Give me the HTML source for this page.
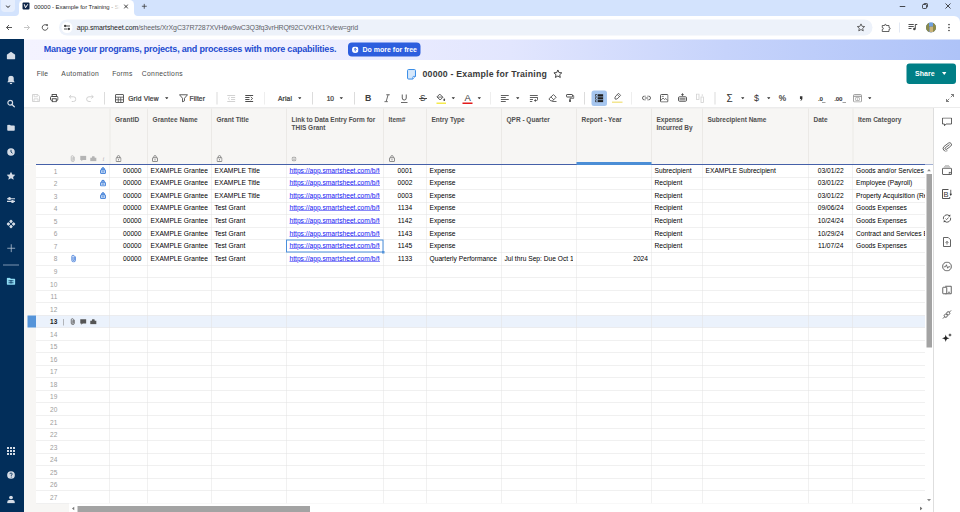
<!DOCTYPE html>
<html><head><meta charset="utf-8"><title>00000 - Example for Training - Smartsheet</title>
<style>
html,body{margin:0;padding:0;background:#fff;overflow:hidden;width:960px;height:512px}
#c{position:absolute;left:0;top:0;width:1920px;height:1024px;transform:scale(.5);transform-origin:0 0;overflow:hidden;font-family:"Liberation Sans",Arial,sans-serif;background:#fff}
#c div,#c span,#c svg{position:absolute;display:block}
#c span{white-space:nowrap}
</style></head><body><div id="c">
<div style="left:0px;top:0px;width:1920px;height:32px;background:#d3e3fd;"></div>
<div style="left:2px;top:0px;width:28px;height:23.5px;background:#e6eefd;border-radius:0 0 8px 8px"></div>
<svg style="left:11.0px;top:9.5px;" width="10" height="6" viewBox="0 0 10 6"><path d="M1 1 L5 5 L9 1" fill="none" stroke="#1f1f1f" stroke-width="2"/></svg>
<div style="left:37.5px;top:0px;width:230px;height:34px;background:#fff;border-radius:9px 9px 0 0"></div>
<svg style="left:29.5px;top:24px;" width="8" height="8" viewBox="0 0 8 8"><path d="M8 0 V8 H0 A8 8 0 0 0 8 0Z" fill="#fff"/></svg>
<svg style="left:267.5px;top:24px;" width="8" height="8" viewBox="0 0 8 8"><path d="M0 0 V8 H8 A8 8 0 0 1 0 0Z" fill="#fff"/></svg>
<div style="left:45px;top:5px;width:14px;height:14px;background:#0b2347;border-radius:2px"></div>
<svg style="left:45.0px;top:5.0px;" width="14" height="14" viewBox="0 0 14 14"><path d="M3.5 3.5 L6 10.5 L10.5 3.5" fill="none" stroke="#fff" stroke-width="2"/></svg>
<div style="left:68px;top:4px;width:172px;height:19px;overflow:hidden"><span style="left:0;top:0;font-size:12px;line-height:19px;color:#1f1f1f;letter-spacing:-0.1px">00000 - Example for Training - Smartsheet</span><div style="right:0;top:0;width:26px;height:19px;background:linear-gradient(90deg,rgba(255,255,255,0),#fff)"></div></div>
<svg style="left:247.0px;top:7.5px;" width="10" height="10" viewBox="0 0 10 10"><path d="M1 1 L9 9 M9 1 L1 9" stroke="#1f1f1f" stroke-width="1.7"/></svg>
<svg style="left:282.5px;top:7.0px;" width="11" height="11" viewBox="0 0 11 11"><path d="M5.5 0.5 V10.5 M0.5 5.5 H10.5" stroke="#333" stroke-width="1.5"/></svg>
<svg style="left:1799.0px;top:12.0px;" width="12" height="2" viewBox="0 0 12 2"><path d="M0 1 H12" stroke="#1f1f1f" stroke-width="1.6"/></svg>
<svg style="left:1844.0px;top:6.0px;" width="12" height="12" viewBox="0 0 12 12"><rect x="1" y="3" width="8" height="8" rx="1.5" fill="none" stroke="#1f1f1f" stroke-width="1.5"/><path d="M3.5 3 V2.5 A1.5 1.5 0 0 1 5 1 H9.5 A1.5 1.5 0 0 1 11 2.5 V7 A1.5 1.5 0 0 1 9.5 8.5" fill="none" stroke="#1f1f1f" stroke-width="1.5"/></svg>
<svg style="left:1890.0px;top:6.0px;" width="12" height="12" viewBox="0 0 12 12"><path d="M1 1 L11 11 M11 1 L1 11" stroke="#1f1f1f" stroke-width="1.6"/></svg>
<div style="left:0px;top:32px;width:1920px;height:46.5px;background:#fff;"></div>
<svg style="left:11.0px;top:48.0px;" width="14" height="14" viewBox="0 0 14 14"><path d="M13 7 H2 M7 2 L2 7 L7 12" fill="none" stroke="#444" stroke-width="1.8"/></svg>
<svg style="left:47.0px;top:48.0px;" width="14" height="14" viewBox="0 0 14 14"><path d="M1 7 H12 M7 2 L12 7 L7 12" fill="none" stroke="#c0c0c0" stroke-width="1.8"/></svg>
<svg style="left:82.0px;top:47.0px;" width="16" height="16" viewBox="0 0 16 16"><path d="M13.5 8 A5.5 5.5 0 1 1 11.9 4.1" fill="none" stroke="#444" stroke-width="1.9"/><path d="M9.5 1.5 H13.8 V5.8 Z" fill="#444"/></svg>
<div style="left:117.5px;top:39px;width:1627.5px;height:32px;background:#edf2fa;border-radius:16px"></div>
<div style="left:123px;top:44px;width:22px;height:22px;background:#fff;border-radius:11px"></div>
<svg style="left:127px;top:48px;" width="14" height="14" viewBox="0 0 14 14"><path d="M5 4 H13 M1 10 H8" stroke="#3c3c3c" stroke-width="1.8" fill="none"/><circle cx="3.2" cy="4" r="2.3" fill="#3c3c3c"/><circle cx="10.8" cy="10" r="2.3" fill="#3c3c3c"/></svg>
<span style="left:153.50px;top:46.00px;font-size:14px;line-height:18px;color:#1f1f1f;letter-spacing:-0.214px;">app.smartsheet.com</span>
<span style="left:276.50px;top:46.00px;font-size:14px;line-height:18px;color:#5f6368;letter-spacing:-0.238px;">/sheets/XrXgC37R7287XVH6w9wC3Q3fq3vrHRQf92CVXHX1?view=grid</span>
<svg style="left:1713.0px;top:46.0px;" width="18" height="18" viewBox="0 0 18 18"><path d="M9 1.8 L11.1 6.6 L16.3 7.1 L12.4 10.6 L13.5 15.7 L9 13 L4.5 15.7 L5.6 10.6 L1.7 7.1 L6.9 6.6 Z" fill="none" stroke="#444" stroke-width="1.6" stroke-linejoin="round"/></svg>
<svg style="left:1762px;top:46px;" width="20" height="18" viewBox="0 0 20 18"><path d="M2.5 5 H7.2 V4 Q7.2 2.8 8.8 2.8 Q10.4 2.8 10.4 4 V5 H16 V9.4 H17 Q18.3 9.4 18.3 11 Q18.3 12.6 17 12.6 H16 V17 H2.5 V12.8 H3.3 Q4.6 12.8 4.6 11 Q4.6 9.2 3.3 9.2 H2.5 Z" fill="none" stroke="#3c3c3c" stroke-width="1.6" stroke-linejoin="miter"/></svg>
<svg style="left:1908px;top:32px;" width="12" height="12" viewBox="0 0 12 12"><path d="M12 0 H0 A12 12 0 0 1 12 12 Z" fill="#d3e3fd"/></svg>
<div style="left:1798.5px;top:45px;width:1.5px;height:20px;background:#c7d3e8;"></div>
<svg style="left:1816px;top:46px;" width="20" height="16" viewBox="0 0 20 16"><path d="M1 3 H11.5 M1 7 H11.5 M1 11 H7" stroke="#444" stroke-width="1.9" fill="none"/><path d="M14.6 2.5 V11.5 M14.6 3 H18.5" stroke="#444" stroke-width="1.9" fill="none"/><circle cx="12.8" cy="11.8" r="2.5" fill="#444"/></svg>
<div style="left:1852px;top:44.5px;width:20px;height:20px;border-radius:10px;overflow:hidden;background:#4f79b8"><div style="left:0;top:0;width:6px;height:20px;background:#8a8a4a"></div><div style="left:14px;top:0;width:6px;height:20px;background:#8f8a45"></div><div style="left:6px;top:0;width:8px;height:7px;background:#6fa0dc"></div><div style="left:6.5px;top:8px;width:7px;height:12px;background:#c9b37a"></div></div>
<svg style="left:1896.0px;top:47.0px;" width="4" height="16" viewBox="0 0 4 16"><circle cx="2" cy="2" r="1.7" fill="#444"/><circle cx="2" cy="8" r="1.7" fill="#444"/><circle cx="2" cy="14" r="1.7" fill="#444"/></svg>
<div style="left:0px;top:78px;width:48px;height:946px;background:#022e5a;"></div>
<svg style="left:13.0px;top:103.0px;" width="18" height="16" viewBox="0 0 18 16"><path d="M9 0.5 L17.5 6.5 V14 A2 2 0 0 1 15.5 16 H2.5 A2 2 0 0 1 0.5 14 V6.5 Z" fill="#d5dce6"/></svg>
<svg style="left:14.0px;top:150.5px;" width="16" height="18" viewBox="0 0 16 18"><path d="M8 0.5 A5.5 5.5 0 0 1 13.5 6 V10.5 L15.5 13.5 H0.5 L2.5 10.5 V6 A5.5 5.5 0 0 1 8 0.5 Z" fill="#d5dce6"/><path d="M5.5 15 H10.5 A2.5 2.5 0 0 1 5.5 15Z" fill="#d5dce6"/></svg>
<svg style="left:14.0px;top:199.0px;" width="16" height="16" viewBox="0 0 16 16"><circle cx="6.5" cy="6.5" r="4.7" fill="none" stroke="#d5dce6" stroke-width="2.4"/><path d="M10 10 L15 15" stroke="#d5dce6" stroke-width="2.6" stroke-linecap="round"/></svg>
<svg style="left:14.0px;top:248.5px;" width="16" height="13" viewBox="0 0 16 13"><path d="M0.5 2 A1.5 1.5 0 0 1 2 0.5 H6 L7.5 2 H14 A1.5 1.5 0 0 1 15.5 3.5 V11 A1.5 1.5 0 0 1 14 12.5 H2 A1.5 1.5 0 0 1 0.5 11 Z" fill="#d5dce6"/></svg>
<svg style="left:14.0px;top:295.5px;" width="16" height="16" viewBox="0 0 16 16"><circle cx="8" cy="8" r="7.5" fill="#d5dce6"/><path d="M8 3.5 V8 L11 10.5" fill="none" stroke="#03305b" stroke-width="1.8"/></svg>
<svg style="left:13.0px;top:342.5px;" width="18" height="17" viewBox="0 0 18 17"><path d="M9 0.5 L11.6 6 L17.6 6.7 L13.2 10.8 L14.4 16.7 L9 13.7 L3.6 16.7 L4.8 10.8 L0.4 6.7 L6.4 6 Z" fill="#d5dce6"/></svg>
<svg style="left:13.0px;top:394.0px;" width="18" height="12" viewBox="0 0 18 12"><path d="M1 3.5 H17 M1 8.8 H17" stroke="#d5dce6" stroke-width="2.4"/><circle cx="6" cy="3.2" r="3" fill="#d5dce6"/><circle cx="12" cy="8.8" r="3" fill="#d5dce6"/></svg>
<svg style="left:13.0px;top:439.0px;" width="18" height="18" viewBox="0 0 18 18"><g fill="#d5dce6" transform="rotate(45 9 9)"><rect x="2.5" y="2.5" width="5.6" height="5.6" rx="1.2"/><rect x="9.9" y="2.5" width="5.6" height="5.6" rx="1.2"/><rect x="2.5" y="9.9" width="5.6" height="5.6" rx="1.2"/><rect x="9.9" y="9.9" width="5.6" height="5.6" rx="1.2"/></g></svg>
<svg style="left:14px;top:488px;" width="17" height="17" viewBox="0 0 17 17"><path d="M8.5 0.5 V16.5 M0.5 8.5 H16.5" stroke="#b4c0d0" stroke-width="1.6"/></svg>
<div style="left:6px;top:528.5px;width:32px;height:2px;background:#7d93b0;"></div>
<svg style="left:13.0px;top:554.5px;" width="18" height="15" viewBox="0 0 18 15"><path d="M0.5 2 A1.5 1.5 0 0 1 2 0.5 H7 L8.5 2.3 H16 A1.5 1.5 0 0 1 17.5 3.8 V13 A1.5 1.5 0 0 1 16 14.5 H2 A1.5 1.5 0 0 1 0.5 13 Z" fill="#8fdcf5"/><path d="M4 6.5 H14 M4 10.5 H14 M9 5 V12" stroke="#03305b" stroke-width="1.6"/></svg>
<svg style="left:14.0px;top:894.0px;" width="16" height="16" viewBox="0 0 16 16"><g fill="#d5dce6"><rect x="0" y="0" width="4" height="4"/><rect x="6" y="0" width="4" height="4"/><rect x="12" y="0" width="4" height="4"/><rect x="0" y="6" width="4" height="4"/><rect x="6" y="6" width="4" height="4"/><rect x="12" y="6" width="4" height="4"/><rect x="0" y="12" width="4" height="4"/><rect x="6" y="12" width="4" height="4"/><rect x="12" y="12" width="4" height="4"/></g></svg>
<svg style="left:14.0px;top:942.0px;" width="16" height="16" viewBox="0 0 16 16"><circle cx="8" cy="8" r="7.7" fill="#d5dce6"/><path d="M5.8 6.3 A2.3 2.3 0 1 1 8.5 8.5 V9.8" fill="none" stroke="#03305b" stroke-width="1.7"/><circle cx="8.5" cy="12.2" r="1" fill="#03305b"/></svg>
<svg style="left:14.0px;top:990.5px;" width="16" height="16" viewBox="0 0 16 16"><circle cx="8" cy="4" r="3.7" fill="#d5dce6"/><path d="M0.5 15.5 V13 A4 4 0 0 1 4.5 9 H11.5 A4 4 0 0 1 15.5 13 V15.5 Z" fill="#d5dce6"/></svg>
<div style="left:48px;top:78.5px;width:1872px;height:41px;background:linear-gradient(90deg,#f4f3ff 0%,#efefff 30%,#e2e6fe 52%,#c6d3fb 75%,#aec3f8 100%);"></div>
<span style="left:87.50px;top:86.10px;font-size:18px;line-height:23px;color:#1d4bcf;font-weight:700;letter-spacing:-0.409px;">Manage your programs, projects, and processes with more capabilities.</span>
<div style="left:696px;top:85px;width:145px;height:28px;background:#2d5ede;border-radius:8px"></div>
<svg style="left:703.5px;top:92.5px;" width="13" height="13" viewBox="0 0 13 13"><circle cx="6.5" cy="6.5" r="6.5" fill="#fff"/><path d="M6.5 9.8 V3.8 M3.8 6.3 L6.5 3.6 L9.2 6.3" fill="none" stroke="#2f5fdf" stroke-width="1.7"/></svg>
<span style="left:725.00px;top:90.00px;font-size:14px;line-height:18px;color:#fff;font-weight:700;letter-spacing:0.005px;">Do more for free</span>
<span style="left:73.50px;top:138.40px;font-size:13.5px;line-height:18px;color:#4a4a4a;letter-spacing:0.187px;">File</span>
<span style="left:122.50px;top:138.40px;font-size:13.5px;line-height:18px;color:#4a4a4a;letter-spacing:0.771px;">Automation</span>
<span style="left:224.50px;top:138.40px;font-size:13.5px;line-height:18px;color:#4a4a4a;letter-spacing:0.451px;">Forms</span>
<span style="left:283.50px;top:138.40px;font-size:13.5px;line-height:18px;color:#4a4a4a;letter-spacing:0.678px;">Connections</span>
<svg style="left:814.49px;top:138.4px;" width="18.02" height="21.200000000000003" viewBox="0 0 17 20"><path d="M3 1 H14 A2 2 0 0 1 16 3 V14 L11 19 H3 A2 2 0 0 1 1 17 V3 A2 2 0 0 1 3 1 Z" fill="#d6e8fb" stroke="#2f86e6" stroke-width="1.8"/><path d="M11 19 V15.5 A1.5 1.5 0 0 1 12.5 14 H16" fill="#fff" stroke="#2f86e6" stroke-width="1.6"/></svg>
<span style="left:845.00px;top:137.10px;font-size:17.5px;line-height:23px;color:#3a3a3a;font-weight:700;letter-spacing:0.418px;">00000 - Example for Training</span>
<svg style="left:1105.78px;top:138.28px;" width="19.44" height="19.44" viewBox="0 0 18 18"><path d="M9 1.8 L11.1 6.6 L16.3 7.1 L12.4 10.6 L13.5 15.7 L9 13 L4.5 15.7 L5.6 10.6 L1.7 7.1 L6.9 6.6 Z" fill="none" stroke="#333" stroke-width="1.7" stroke-linejoin="round"/></svg>
<div style="left:1812.5px;top:127px;width:99.5px;height:40.5px;background:#007f86;border-radius:6px"></div>
<span style="left:1830.00px;top:136.80px;font-size:14px;line-height:18px;color:#fff;font-weight:700;letter-spacing:0.117px;">Share</span>
<svg style="left:1883.5px;top:144.0px;" width="9" height="6" viewBox="0 0 9 6"><path d="M0 0 H9 L4.5 6 Z" fill="#fff"/></svg>
<svg style="left:64px;top:188px;" width="16" height="16" viewBox="0 0 16 16"><path d="M1 1 H11.5 L15 4.5 V15 H1 Z" fill="none" stroke="#cdcdcd" stroke-width="1.7"/><path d="M4.2 1 V5.5 H10.5 V1 M4 15 V9.7 H12 V15" fill="none" stroke="#cdcdcd" stroke-width="1.5"/></svg>
<svg style="left:100px;top:188px;" width="17" height="17" viewBox="0 0 17 17"><rect x="4.2" y="1" width="8.6" height="4" fill="none" stroke="#454545" stroke-width="1.8"/><rect x="1" y="5" width="15" height="7.6" rx="2" fill="none" stroke="#454545" stroke-width="2"/><rect x="4.5" y="9.5" width="8" height="6" fill="#fff" stroke="#454545" stroke-width="1.8"/></svg>
<svg style="left:136.5px;top:188.5px;" width="16" height="15" viewBox="0 0 16 15"><path d="M1.5 4.5 H10 A4.7 4.7 0 0 1 10 14 H6.5" fill="none" stroke="#cdcdcd" stroke-width="1.8"/><path d="M5.2 1 L1.5 4.5 L5.2 8" fill="none" stroke="#cdcdcd" stroke-width="1.8"/></svg>
<svg style="left:172px;top:188.5px;" width="16" height="15" viewBox="0 0 16 15"><path d="M14.5 4.5 H6 A4.7 4.7 0 0 0 6 14 H9.5" fill="none" stroke="#cdcdcd" stroke-width="1.8"/><path d="M10.8 1 L14.5 4.5 L10.8 8" fill="none" stroke="#cdcdcd" stroke-width="1.8"/></svg>
<div style="left:208.25px;top:184px;width:1.5px;height:25px;background:#dcdcdc;"></div>
<svg style="left:230px;top:188px;" width="18" height="18" viewBox="0 0 18 18"><rect x="1" y="1" width="16" height="16" rx="1" fill="none" stroke="#454545" stroke-width="1.7"/><path d="M1 6.3 H17 M1 11.6 H17 M6.5 6.3 V17 M11.5 6.3 V17" stroke="#454545" stroke-width="1.5" fill="none"/></svg>
<span style="left:256.50px;top:188.10px;font-size:13.3px;line-height:17px;color:#3a3a3a;letter-spacing:0.399px;-webkit-text-stroke:0.45px #3a3a3a;">Grid View</span>
<svg style="left:330.0px;top:193.5px;" width="7" height="5" viewBox="0 0 7 5"><path d="M0 0.3 H7 L3.5 4.7 Z" fill="#333"/></svg>
<svg style="left:357.5px;top:188px;" width="18" height="17" viewBox="0 0 18 17"><path d="M1 1.5 H17 L11 8.5 V13.6 L7 15.8 V8.5 Z" fill="none" stroke="#454545" stroke-width="1.7" stroke-linejoin="round"/></svg>
<span style="left:379.00px;top:188.10px;font-size:13.3px;line-height:17px;color:#3a3a3a;letter-spacing:0.241px;-webkit-text-stroke:0.45px #3a3a3a;">Filter</span>
<div style="left:433.25px;top:184px;width:1.5px;height:25px;background:#dcdcdc;"></div>
<svg style="left:454px;top:188px;" width="17" height="18" viewBox="0 0 17 18"><path d="M0.5 3 H16.5 M8 7 H16.5 M8 11 H16.5 M0.5 15 H16.5" stroke="#cdcdcd" stroke-width="1.8" fill="none"/><path d="M5.5 6 L2 9 L5.5 12" fill="none" stroke="#cdcdcd" stroke-width="1.6"/></svg>
<svg style="left:490px;top:188px;" width="17" height="18" viewBox="0 0 17 18"><path d="M0.5 3 H16.5 M0.5 7 H9 M0.5 11 H9 M0.5 15 H16.5" stroke="#454545" stroke-width="1.9" fill="none"/><path d="M11.5 5.8 L15.2 9 L11.5 12.2" fill="none" stroke="#454545" stroke-width="1.7"/></svg>
<div style="left:527.75px;top:184px;width:1.5px;height:25px;background:#dcdcdc;"></div>
<span style="left:556.00px;top:188.10px;font-size:13.3px;line-height:17px;color:#3a3a3a;letter-spacing:0.279px;-webkit-text-stroke:0.45px #3a3a3a;">Arial</span>
<svg style="left:595.5px;top:193.5px;" width="7" height="5" viewBox="0 0 7 5"><path d="M0 0.3 H7 L3.5 4.7 Z" fill="#333"/></svg>
<div style="left:624.25px;top:184px;width:1.5px;height:25px;background:#dcdcdc;"></div>
<span style="left:653.50px;top:188.10px;font-size:13.3px;line-height:17px;color:#3a3a3a;letter-spacing:-0.397px;-webkit-text-stroke:0.45px #3a3a3a;">10</span>
<svg style="left:679.0px;top:193.5px;" width="7" height="5" viewBox="0 0 7 5"><path d="M0 0.3 H7 L3.5 4.7 Z" fill="#333"/></svg>
<div style="left:708.25px;top:184px;width:1.5px;height:25px;background:#dcdcdc;"></div>
<span style="left:730.18px;top:185.00px;font-size:17.5px;line-height:23px;color:#404040;font-weight:700;">B</span>
<svg style="left:766px;top:188px;" width="16" height="17" viewBox="0 0 16 17"><path d="M10.2 1.5 L6.2 15.5 M6.5 1.5 H13.5 M2.8 15.5 H9.8" stroke="#454545" stroke-width="1.6" fill="none"/></svg>
<svg style="left:801px;top:187px;" width="15" height="20" viewBox="0 0 15 20"><path d="M3.5 2 V9 A4 4 0 0 0 11.5 9 V2" fill="none" stroke="#454545" stroke-width="1.7"/><path d="M1 18 H14" stroke="#454545" stroke-width="1.6"/></svg>
<span style="left:840.00px;top:186.00px;font-size:16.5px;line-height:21px;color:#333;">S</span>
<div style="left:837.5px;top:196px;width:16px;height:1.6px;background:#454545;"></div>
<svg style="left:872px;top:186.5px;" width="20" height="16" viewBox="0 0 20 16"><path d="M7.5 1.2 L13.8 7.5 L8.3 13 L2 6.7 Z" fill="none" stroke="#454545" stroke-width="1.8" stroke-linejoin="round"/><path d="M3 7.2 H13" stroke="#454545" stroke-width="1.5"/><path d="M16.5 9.5 C17.9 11.4 18.3 12.2 18.3 13 A1.8 1.8 0 0 1 14.7 13 C14.7 12.2 15.1 11.4 16.5 9.5Z" fill="#454545"/></svg>
<div style="left:873px;top:205px;width:19px;height:3px;background:#f5ea4e;"></div>
<svg style="left:903.0px;top:193.5px;" width="7" height="5" viewBox="0 0 7 5"><path d="M0 0.3 H7 L3.5 4.7 Z" fill="#333"/></svg>
<span style="left:929.16px;top:182.50px;font-size:19px;line-height:25px;color:#3a3a3a;">A</span>
<div style="left:925px;top:205px;width:20px;height:3px;background:#e31b1b;"></div>
<svg style="left:954.5px;top:193.5px;" width="7" height="5" viewBox="0 0 7 5"><path d="M0 0.3 H7 L3.5 4.7 Z" fill="#333"/></svg>
<div style="left:979.75px;top:184px;width:1.5px;height:25px;background:#dcdcdc;"></div>
<svg style="left:1001px;top:188px;" width="18" height="18" viewBox="0 0 18 18"><path d="M0.5 3 H16.5 M0.5 7 H10.5 M0.5 11 H16.5 M0.5 15 H10.5" stroke="#454545" stroke-width="1.7" fill="none"/></svg>
<svg style="left:1031.5px;top:193.5px;" width="7" height="5" viewBox="0 0 7 5"><path d="M0 0.3 H7 L3.5 4.7 Z" fill="#333"/></svg>
<svg style="left:1059px;top:188px;" width="18" height="18" viewBox="0 0 18 18"><path d="M0.5 3 H16.5 M0.5 7 H16.5 M0.5 11 H7 M0.5 15 H5.5" stroke="#454545" stroke-width="1.7" fill="none"/><path d="M16 7 V11 A2 2 0 0 1 14 13 H10.5" fill="none" stroke="#454545" stroke-width="1.6"/><path d="M12.5 10.2 L9 13 L12.5 15.8 Z" fill="#454545"/></svg>
<svg style="left:1096px;top:188px;" width="18" height="17" viewBox="0 0 18 17"><path d="M11 1.2 L16.3 6.5 L9 13.8 H5.7 L1.7 9.8 Z" fill="none" stroke="#454545" stroke-width="1.7" stroke-linejoin="round"/><path d="M5.8 5.8 L11.7 11.7 M8.5 15 H17" stroke="#454545" stroke-width="1.6"/></svg>
<svg style="left:1132px;top:188px;" width="17" height="17" viewBox="0 0 17 17"><rect x="1" y="1" width="12" height="5" rx="1.2" fill="none" stroke="#454545" stroke-width="1.9"/><path d="M13 3.5 H15.7 V8.5 H8 V11" fill="none" stroke="#454545" stroke-width="1.6"/><rect x="6.3" y="10.5" width="3.4" height="5.7" rx="1.2" fill="#454545"/></svg>
<div style="left:1168.25px;top:184px;width:1.5px;height:25px;background:#dcdcdc;"></div>
<div style="left:1182.5px;top:180.5px;width:31.5px;height:31px;background:#a6c6ef;border-radius:5px"></div>
<svg style="left:1190px;top:188px;" width="17" height="17" viewBox="0 0 17 17"><rect x="0.5" y="0.5" width="16" height="16" fill="#1f1f1f"/><path d="M0 5.7 H17 M0 11.3 H17" stroke="#a6c6ef" stroke-width="1.3"/><path d="M5 0 V17" stroke="#a6c6ef" stroke-width="1.2"/><rect x="1.8" y="1.8" width="2.2" height="2.8" fill="#a6c6ef"/><rect x="1.8" y="7" width="2.2" height="3" fill="#a6c6ef"/><rect x="1.8" y="12.5" width="2.2" height="2.8" fill="#a6c6ef"/></svg>
<svg style="left:1227px;top:185px;" width="16" height="16" viewBox="0 0 16 16"><path d="M10 1.5 L14.3 5.8 L7 13.1 H3 V9.1 Z" fill="none" stroke="#454545" stroke-width="1.6" stroke-linejoin="round"/><path d="M7.6 4 L11.8 8.2" stroke="#454545" stroke-width="1.5"/></svg>
<div style="left:1224px;top:202.5px;width:21px;height:3px;background:#f3e691;"></div>
<div style="left:1262.75px;top:184px;width:1.5px;height:25px;background:#dcdcdc;"></div>
<svg style="left:1284px;top:191px;" width="18" height="10" viewBox="0 0 18 10"><path d="M7.5 1 H5 A4 4 0 0 0 5 9 H7.5 M10.5 1 H13 A4 4 0 0 1 13 9 H10.5 M5.7 5 H12.3" fill="none" stroke="#454545" stroke-width="1.7"/></svg>
<svg style="left:1320px;top:188px;" width="17" height="17" viewBox="0 0 17 17"><rect x="1" y="1" width="15" height="15" rx="1.8" fill="none" stroke="#454545" stroke-width="1.8"/><path d="M1.5 13 L6 8 L9 11 L11.5 9 L15.5 13" fill="none" stroke="#454545" stroke-width="1.5"/><path d="M3.5 4.8 H7.5" stroke="#454545" stroke-width="1.4"/></svg>
<svg style="left:1356px;top:186px;" width="18" height="18" viewBox="0 0 18 18"><path d="M9 0.5 V6 M6.3 3.2 H11.7" stroke="#454545" stroke-width="1.6"/><rect x="1" y="7.5" width="16" height="9" rx="2" fill="none" stroke="#454545" stroke-width="1.8"/><path d="M3 10.7 H15 M3 13.5 H15" stroke="#454545" stroke-width="1.4"/></svg>
<svg style="left:1392px;top:187px;" width="16" height="19" viewBox="0 0 16 19"><rect x="1" y="1" width="5" height="11" fill="none" stroke="#cdcdcd" stroke-width="1.5"/><rect x="10" y="7" width="5" height="11" fill="none" stroke="#cdcdcd" stroke-width="1.5"/><path d="M12.5 1.5 V5" stroke="#cdcdcd" stroke-width="1.5"/></svg>
<div style="left:1429.25px;top:184px;width:1.5px;height:25px;background:#dcdcdc;"></div>
<span style="left:1452.82px;top:183.00px;font-size:20px;line-height:26px;color:#333;">Σ</span>
<svg style="left:1481.5px;top:193.5px;" width="7" height="5" viewBox="0 0 7 5"><path d="M0 0.3 H7 L3.5 4.7 Z" fill="#333"/></svg>
<span style="left:1507.99px;top:184.50px;font-size:18px;line-height:23px;color:#333;">$</span>
<svg style="left:1534.0px;top:193.5px;" width="7" height="5" viewBox="0 0 7 5"><path d="M0 0.3 H7 L3.5 4.7 Z" fill="#333"/></svg>
<span style="left:1557.66px;top:186.00px;font-size:16.5px;line-height:21px;color:#333;-webkit-text-stroke:0.35px #333;">%</span>
<svg style="left:1599px;top:191.5px;" width="7" height="10" viewBox="0 0 7 10"><path d="M0.8 0.5 H5.8 V5 C5.8 7.5 4.3 9 2 9.5 V8.2 C3 7.8 3.5 7 3.5 5.8 H0.8 Z" fill="#333"/></svg>
<span style="left:1635.79px;top:189.00px;font-size:12.5px;line-height:16px;color:#333;font-weight:700;letter-spacing:-0.3px;">.0</span>
<div style="left:1644px;top:204.7px;width:7px;height:1.4px;background:#454545;"></div>
<span style="left:1668.31px;top:189.00px;font-size:12.5px;line-height:16px;color:#333;font-weight:700;letter-spacing:-0.3px;">.00</span>
<div style="left:1685px;top:204.7px;width:7px;height:1.4px;background:#454545;"></div>
<svg style="left:1706px;top:187px;" width="18" height="18" viewBox="0 0 18 18"><rect x="1" y="2" width="16" height="15" rx="2" fill="none" stroke="#8c8c8c" stroke-width="1.6"/><path d="M1 5.5 H17" stroke="#8c8c8c" stroke-width="2"/><rect x="5.5" y="8.5" width="7" height="5.5" fill="none" stroke="#8c8c8c" stroke-width="1.2"/><path d="M9 9.5 V13" stroke="#8c8c8c" stroke-width="1"/></svg>
<svg style="left:1735.5px;top:193.5px;" width="7" height="5" viewBox="0 0 7 5"><path d="M0 0.3 H7 L3.5 4.7 Z" fill="#333"/></svg>
<svg style="left:1892px;top:188px;" width="16" height="16" viewBox="0 0 16 16"><path d="M10 1 H15 V6 M15 1 L9.5 6.5 M6 15 H1 V10 M1 15 L6.5 9.5" fill="none" stroke="#555" stroke-width="1.5"/></svg>
<div style="left:48px;top:215.2px;width:1872px;height:1.8px;background:#d9d9d9;"></div>
<div style="left:48px;top:217px;width:1819px;height:112px;background:#f7f6f4;"></div>
<div style="left:48px;top:329px;width:24px;height:695px;background:#f7f6f4;"></div>
<div style="left:72px;top:1007.5px;width:66px;height:17px;background:#f7f6f4;"></div>
<div style="left:219px;top:217px;width:1.5px;height:111px;background:#ebe9e6;"></div>
<div style="left:294px;top:217px;width:1.5px;height:111px;background:#ebe9e6;"></div>
<div style="left:422px;top:217px;width:1.5px;height:111px;background:#ebe9e6;"></div>
<div style="left:572px;top:217px;width:1.5px;height:111px;background:#ebe9e6;"></div>
<div style="left:766px;top:217px;width:1.5px;height:111px;background:#ebe9e6;"></div>
<div style="left:852px;top:217px;width:1.5px;height:111px;background:#ebe9e6;"></div>
<div style="left:1002px;top:217px;width:1.5px;height:111px;background:#ebe9e6;"></div>
<div style="left:1152px;top:217px;width:1.5px;height:111px;background:#ebe9e6;"></div>
<div style="left:1302px;top:217px;width:1.5px;height:111px;background:#ebe9e6;"></div>
<div style="left:1404px;top:217px;width:1.5px;height:111px;background:#ebe9e6;"></div>
<div style="left:1616px;top:217px;width:1.5px;height:111px;background:#ebe9e6;"></div>
<div style="left:1705px;top:217px;width:1.5px;height:111px;background:#ebe9e6;"></div>
<span style="left:230.00px;top:230.50px;font-size:13px;line-height:17px;color:#505050;font-weight:700;letter-spacing:0.118px;">GrantID</span>
<span style="left:305.00px;top:230.50px;font-size:13px;line-height:17px;color:#505050;font-weight:700;letter-spacing:0.196px;">Grantee Name</span>
<span style="left:433.00px;top:230.50px;font-size:13px;line-height:17px;color:#505050;font-weight:700;">Grant Title</span>
<span style="left:777.00px;top:230.50px;font-size:13px;line-height:17px;color:#505050;font-weight:700;">Item#</span>
<span style="left:863.00px;top:230.50px;font-size:13px;line-height:17px;color:#505050;font-weight:700;">Entry Type</span>
<span style="left:1013.00px;top:230.50px;font-size:13px;line-height:17px;color:#505050;font-weight:700;">QPR - Quarter</span>
<span style="left:1163.00px;top:230.50px;font-size:13px;line-height:17px;color:#505050;font-weight:700;">Report - Year</span>
<span style="left:1415.00px;top:230.50px;font-size:13px;line-height:17px;color:#505050;font-weight:700;">Subrecipient Name</span>
<span style="left:1627.00px;top:230.50px;font-size:13px;line-height:17px;color:#505050;font-weight:700;">Date</span>
<span style="left:1716.00px;top:230.50px;font-size:13px;line-height:17px;color:#505050;font-weight:700;">Item Category</span>
<span style="left:583.00px;top:230.50px;font-size:13px;line-height:17px;color:#505050;font-weight:700;letter-spacing:-0.029px;">Link to Data Entry Form for</span>
<span style="left:583.00px;top:246.50px;font-size:13px;line-height:17px;color:#505050;font-weight:700;">THIS Grant</span>
<span style="left:1313.00px;top:230.50px;font-size:13px;line-height:17px;color:#505050;font-weight:700;">Expense</span>
<span style="left:1313.00px;top:246.50px;font-size:13px;line-height:17px;color:#505050;font-weight:700;">Incurred By</span>
<svg style="left:230.5px;top:310.0px;" width="12" height="14" viewBox="0 0 12 14"><rect x="1" y="5.5" width="10" height="7.5" rx="0.8" fill="none" stroke="#6b6b6b" stroke-width="1.5"/><path d="M3.5 5.5 V3.6 A2.5 2.5 0 0 1 8.5 3.6 V5.5" fill="none" stroke="#6b6b6b" stroke-width="1.4"/><path d="M6 8 V10.8" stroke="#6b6b6b" stroke-width="1.4"/></svg>
<svg style="left:304.0px;top:310.0px;" width="12" height="14" viewBox="0 0 12 14"><rect x="1" y="5.5" width="10" height="7.5" rx="0.8" fill="none" stroke="#6b6b6b" stroke-width="1.5"/><path d="M3.5 5.5 V3.6 A2.5 2.5 0 0 1 8.5 3.6 V5.5" fill="none" stroke="#6b6b6b" stroke-width="1.4"/><path d="M6 8 V10.8" stroke="#6b6b6b" stroke-width="1.4"/></svg>
<svg style="left:433.0px;top:310.0px;" width="12" height="14" viewBox="0 0 12 14"><rect x="1" y="5.5" width="10" height="7.5" rx="0.8" fill="none" stroke="#6b6b6b" stroke-width="1.5"/><path d="M3.5 5.5 V3.6 A2.5 2.5 0 0 1 8.5 3.6 V5.5" fill="none" stroke="#6b6b6b" stroke-width="1.4"/><path d="M6 8 V10.8" stroke="#6b6b6b" stroke-width="1.4"/></svg>
<svg style="left:777.5px;top:310.0px;" width="12" height="14" viewBox="0 0 12 14"><rect x="1" y="5.5" width="10" height="7.5" rx="0.8" fill="none" stroke="#6b6b6b" stroke-width="1.5"/><path d="M3.5 5.5 V3.6 A2.5 2.5 0 0 1 8.5 3.6 V5.5" fill="none" stroke="#6b6b6b" stroke-width="1.4"/><path d="M6 8 V10.8" stroke="#6b6b6b" stroke-width="1.4"/></svg>
<svg style="left:582.5px;top:312.5px;" width="10" height="10" viewBox="0 0 10 10"><circle cx="5" cy="5" r="4.2" fill="none" stroke="#6b6b6b" stroke-width="1.2"/><path d="M5 4.3 V7.6" stroke="#6b6b6b" stroke-width="1.3"/><circle cx="5" cy="2.8" r="0.8" fill="#6b6b6b"/></svg>
<svg style="left:140.4px;top:309.72px;" width="11.200000000000001" height="14.560000000000002" viewBox="0 0 10 13"><path d="M7.8 3.2 V9 A2.8 2.8 0 0 1 2.2 9 V3.2 A2 2 0 0 1 6.2 3.2 V8.6 A1.1 1.1 0 0 1 4 8.6 V4" fill="none" stroke="#b4b4b4" stroke-width="1.3"/></svg>
<svg style="left:159.9px;top:311.45px;" width="13.200000000000001" height="12.100000000000001" viewBox="0 0 12 11"><path d="M0.5 0.5 H11.5 V8 H5 L2.5 10.5 V8 H0.5 Z" fill="#b4b4b4"/></svg>
<svg style="left:180.4px;top:312.0px;" width="13.200000000000001" height="11.0" viewBox="0 0 12 10"><path d="M0.5 3 H11.5 V9.5 H0.5 Z M3.5 3 V1.6 A1 1 0 0 1 4.5 0.6 H7.5 A1 1 0 0 1 8.5 1.6 V3" fill="#b4b4b4"/></svg>
<span style="left:205.06px;top:308.50px;font-size:13px;line-height:17px;color:#b4b4b4;font-style:italic;font-family:'Liberation Serif',serif;">i</span>
<div style="left:72px;top:329px;width:1778px;height:676px;background:#fff;"></div>
<div style="left:55px;top:631px;width:17px;height:24px;background:#5594d9;"></div>
<div style="left:72px;top:631px;width:1778px;height:24px;background:#ebf2fc;"></div>
<div style="left:72px;top:354px;width:1778px;height:1px;background:#e0e0e0;"></div>
<div style="left:72px;top:379px;width:1778px;height:1px;background:#e0e0e0;"></div>
<div style="left:72px;top:404px;width:1778px;height:1px;background:#e0e0e0;"></div>
<div style="left:72px;top:429px;width:1778px;height:1px;background:#e0e0e0;"></div>
<div style="left:72px;top:454px;width:1778px;height:1px;background:#e0e0e0;"></div>
<div style="left:72px;top:479px;width:1778px;height:1px;background:#e0e0e0;"></div>
<div style="left:72px;top:504px;width:1778px;height:1px;background:#e0e0e0;"></div>
<div style="left:72px;top:530px;width:1778px;height:1px;background:#e0e0e0;"></div>
<div style="left:72px;top:555px;width:1778px;height:1px;background:#e0e0e0;"></div>
<div style="left:72px;top:580px;width:1778px;height:1px;background:#e0e0e0;"></div>
<div style="left:72px;top:605px;width:1778px;height:1px;background:#e0e0e0;"></div>
<div style="left:72px;top:630px;width:1778px;height:1px;background:#e0e0e0;"></div>
<div style="left:72px;top:655px;width:1778px;height:1px;background:#e0e0e0;"></div>
<div style="left:72px;top:680px;width:1778px;height:1px;background:#e0e0e0;"></div>
<div style="left:72px;top:705px;width:1778px;height:1px;background:#e0e0e0;"></div>
<div style="left:72px;top:730px;width:1778px;height:1px;background:#e0e0e0;"></div>
<div style="left:72px;top:755px;width:1778px;height:1px;background:#e0e0e0;"></div>
<div style="left:72px;top:780px;width:1778px;height:1px;background:#e0e0e0;"></div>
<div style="left:72px;top:805px;width:1778px;height:1px;background:#e0e0e0;"></div>
<div style="left:72px;top:831px;width:1778px;height:1px;background:#e0e0e0;"></div>
<div style="left:72px;top:856px;width:1778px;height:1px;background:#e0e0e0;"></div>
<div style="left:72px;top:881px;width:1778px;height:1px;background:#e0e0e0;"></div>
<div style="left:72px;top:906px;width:1778px;height:1px;background:#e0e0e0;"></div>
<div style="left:72px;top:931px;width:1778px;height:1px;background:#e0e0e0;"></div>
<div style="left:72px;top:956px;width:1778px;height:1px;background:#e0e0e0;"></div>
<div style="left:72px;top:981px;width:1778px;height:1px;background:#e0e0e0;"></div>
<div style="left:72px;top:1006px;width:1778px;height:1px;background:#e0e0e0;"></div>
<div style="left:219px;top:329px;width:1px;height:678px;background:#e2e2e2;"></div>
<div style="left:294px;top:329px;width:1px;height:678px;background:#e2e2e2;"></div>
<div style="left:422px;top:329px;width:1px;height:678px;background:#e2e2e2;"></div>
<div style="left:572px;top:329px;width:1px;height:678px;background:#e2e2e2;"></div>
<div style="left:766px;top:329px;width:1px;height:678px;background:#e2e2e2;"></div>
<div style="left:852px;top:329px;width:1px;height:678px;background:#e2e2e2;"></div>
<div style="left:1002px;top:329px;width:1px;height:678px;background:#e2e2e2;"></div>
<div style="left:1152px;top:329px;width:1px;height:678px;background:#e2e2e2;"></div>
<div style="left:1302px;top:329px;width:1px;height:678px;background:#e2e2e2;"></div>
<div style="left:1404px;top:329px;width:1px;height:678px;background:#e2e2e2;"></div>
<div style="left:1616px;top:329px;width:1px;height:678px;background:#e2e2e2;"></div>
<div style="left:1705px;top:329px;width:1px;height:678px;background:#e2e2e2;"></div>
<div style="left:72px;top:328px;width:1794px;height:2px;background:#4560a8;"></div>
<div style="left:1153px;top:324px;width:150px;height:6px;background:#4b8ed6;"></div>
<span style="left:107.27px;top:333.92px;font-size:13px;line-height:17px;color:#9c9c9c;">1</span>
<span style="left:107.27px;top:359.00px;font-size:13px;line-height:17px;color:#9c9c9c;">2</span>
<span style="left:107.27px;top:384.08px;font-size:13px;line-height:17px;color:#9c9c9c;">3</span>
<span style="left:107.27px;top:409.16px;font-size:13px;line-height:17px;color:#9c9c9c;">4</span>
<span style="left:107.27px;top:434.24px;font-size:13px;line-height:17px;color:#9c9c9c;">5</span>
<span style="left:107.27px;top:459.32px;font-size:13px;line-height:17px;color:#9c9c9c;">6</span>
<span style="left:107.27px;top:484.40px;font-size:13px;line-height:17px;color:#9c9c9c;">7</span>
<span style="left:107.27px;top:509.48px;font-size:13px;line-height:17px;color:#9c9c9c;">8</span>
<span style="left:107.27px;top:534.56px;font-size:13px;line-height:17px;color:#9c9c9c;">9</span>
<span style="left:100.04px;top:559.64px;font-size:13px;line-height:17px;color:#9c9c9c;">10</span>
<span style="left:101.00px;top:584.72px;font-size:13px;line-height:17px;color:#9c9c9c;">11</span>
<span style="left:100.04px;top:609.80px;font-size:13px;line-height:17px;color:#9c9c9c;">12</span>
<span style="left:100.04px;top:634.88px;font-size:13px;line-height:17px;color:#222;font-weight:700;">13</span>
<span style="left:100.04px;top:659.96px;font-size:13px;line-height:17px;color:#9c9c9c;">14</span>
<span style="left:100.04px;top:685.04px;font-size:13px;line-height:17px;color:#9c9c9c;">15</span>
<span style="left:100.04px;top:710.12px;font-size:13px;line-height:17px;color:#9c9c9c;">16</span>
<span style="left:100.04px;top:735.20px;font-size:13px;line-height:17px;color:#9c9c9c;">17</span>
<span style="left:100.04px;top:760.28px;font-size:13px;line-height:17px;color:#9c9c9c;">18</span>
<span style="left:100.04px;top:785.36px;font-size:13px;line-height:17px;color:#9c9c9c;">19</span>
<span style="left:100.04px;top:810.44px;font-size:13px;line-height:17px;color:#9c9c9c;">20</span>
<span style="left:100.04px;top:835.52px;font-size:13px;line-height:17px;color:#9c9c9c;">21</span>
<span style="left:100.04px;top:860.60px;font-size:13px;line-height:17px;color:#9c9c9c;">22</span>
<span style="left:100.04px;top:885.68px;font-size:13px;line-height:17px;color:#9c9c9c;">23</span>
<span style="left:100.04px;top:910.76px;font-size:13px;line-height:17px;color:#9c9c9c;">24</span>
<span style="left:100.04px;top:935.84px;font-size:13px;line-height:17px;color:#9c9c9c;">25</span>
<span style="left:100.04px;top:960.92px;font-size:13px;line-height:17px;color:#9c9c9c;">26</span>
<span style="left:100.04px;top:986.00px;font-size:13px;line-height:17px;color:#9c9c9c;">27</span>
<div style="left:126px;top:637.88px;width:1.3px;height:13px;background:#777;"></div>
<svg style="left:140.4px;top:636.1px;" width="11.200000000000001" height="14.560000000000002" viewBox="0 0 10 13"><path d="M7.8 3.2 V9 A2.8 2.8 0 0 1 2.2 9 V3.2 A2 2 0 0 1 6.2 3.2 V8.6 A1.1 1.1 0 0 1 4 8.6 V4" fill="none" stroke="#555" stroke-width="1.3"/></svg>
<svg style="left:159.9px;top:637.83px;" width="13.200000000000001" height="12.100000000000001" viewBox="0 0 12 11"><path d="M0.5 0.5 H11.5 V8 H5 L2.5 10.5 V8 H0.5 Z" fill="#555"/></svg>
<svg style="left:180.4px;top:638.38px;" width="13.200000000000001" height="11.0" viewBox="0 0 12 10"><path d="M0.5 3 H11.5 V9.5 H0.5 Z M3.5 3 V1.6 A1 1 0 0 1 4.5 0.6 H7.5 A1 1 0 0 1 8.5 1.6 V3" fill="#555"/></svg>
<svg style="left:200.4px;top:334.22px;" width="12" height="14" viewBox="0 0 12 14"><path d="M3.3 6 V4 A2.7 2.7 0 0 1 8.7 4 V6" fill="#8fb6ea" stroke="#3173d3" stroke-width="1.8"/><rect x="1" y="5.6" width="10" height="7.4" rx="1" fill="#b7d1f3" stroke="#3173d3" stroke-width="1.6"/><path d="M6 7.8 V10.8" stroke="#2a68c8" stroke-width="1.5"/></svg>
<svg style="left:200.4px;top:359.3px;" width="12" height="14" viewBox="0 0 12 14"><path d="M3.3 6 V4 A2.7 2.7 0 0 1 8.7 4 V6" fill="#8fb6ea" stroke="#3173d3" stroke-width="1.8"/><rect x="1" y="5.6" width="10" height="7.4" rx="1" fill="#b7d1f3" stroke="#3173d3" stroke-width="1.6"/><path d="M6 7.8 V10.8" stroke="#2a68c8" stroke-width="1.5"/></svg>
<svg style="left:200.4px;top:384.38000000000005px;" width="12" height="14" viewBox="0 0 12 14"><path d="M3.3 6 V4 A2.7 2.7 0 0 1 8.7 4 V6" fill="#8fb6ea" stroke="#3173d3" stroke-width="1.8"/><rect x="1" y="5.6" width="10" height="7.4" rx="1" fill="#b7d1f3" stroke="#3173d3" stroke-width="1.6"/><path d="M6 7.8 V10.8" stroke="#2a68c8" stroke-width="1.5"/></svg>
<svg style="left:140.75px;top:508.855px;" width="12.5" height="16.25" viewBox="0 0 10 13"><path d="M8 3.2 V9 A3 3 0 0 1 2 9 V3.2 A2.1 2.1 0 0 1 6.2 3.2 V8.6 A1.1 1.1 0 0 1 4 8.6 V4" fill="#dbe7f8" stroke="#3a76d8" stroke-width="1.15"/></svg>
<div style="left:220px;top:329.0px;width:68px;height:24px;overflow:hidden"><span style="right:0px;top:-1px;font-size:13.33px;line-height:25px;color:#000;margin-right:5px;">00000</span></div>
<div style="left:295px;top:329.0px;width:121px;height:24px;overflow:hidden"><span style="left:6px;top:-1px;font-size:13.33px;line-height:25px;color:#000;">EXAMPLE Grantee</span></div>
<div style="left:423px;top:329.0px;width:143px;height:24px;overflow:hidden"><span style="left:6px;top:-1px;font-size:13.33px;line-height:25px;color:#000;">EXAMPLE Title</span></div>
<div style="left:573px;top:329.0px;width:187px;height:24px;overflow:hidden"><span style="left:6px;top:-1px;font-size:13.33px;line-height:25px;color:#1414f2;text-decoration:underline;">https://app.smartsheet.com/b/form/0a1b2c3d</span></div>
<div style="left:767px;top:329.0px;width:79px;height:24px;overflow:hidden"><span style="left:0;right:-7px;text-align:center;top:-1px;font-size:13.33px;line-height:25px;color:#000;">0001</span></div>
<div style="left:853px;top:329.0px;width:143px;height:24px;overflow:hidden"><span style="left:6px;top:-1px;font-size:13.33px;line-height:25px;color:#000;">Expense</span></div>
<div style="left:1303px;top:329.0px;width:95px;height:24px;overflow:hidden"><span style="left:6px;top:-1px;font-size:13.33px;line-height:25px;color:#000;">Subrecipient</span></div>
<div style="left:1405px;top:329.0px;width:205px;height:24px;overflow:hidden"><span style="left:6px;top:-1px;font-size:13.33px;line-height:25px;color:#000;">EXAMPLE Subrecipient</span></div>
<div style="left:1617px;top:329.0px;width:82px;height:24px;overflow:hidden"><span style="left:0;right:-7px;text-align:center;top:-1px;font-size:13.33px;line-height:25px;color:#000;">03/01/22</span></div>
<div style="left:1706px;top:329.0px;width:144px;height:24px;overflow:hidden"><span style="left:6px;top:-1px;font-size:13.33px;line-height:25px;color:#000;">Goods and/or Services</span></div>
<div style="left:220px;top:354.0px;width:68px;height:24px;overflow:hidden"><span style="right:0px;top:-1px;font-size:13.33px;line-height:25px;color:#000;margin-right:5px;">00000</span></div>
<div style="left:295px;top:354.0px;width:121px;height:24px;overflow:hidden"><span style="left:6px;top:-1px;font-size:13.33px;line-height:25px;color:#000;">EXAMPLE Grantee</span></div>
<div style="left:423px;top:354.0px;width:143px;height:24px;overflow:hidden"><span style="left:6px;top:-1px;font-size:13.33px;line-height:25px;color:#000;">EXAMPLE Title</span></div>
<div style="left:573px;top:354.0px;width:187px;height:24px;overflow:hidden"><span style="left:6px;top:-1px;font-size:13.33px;line-height:25px;color:#1414f2;text-decoration:underline;">https://app.smartsheet.com/b/form/0a1b2c3d</span></div>
<div style="left:767px;top:354.0px;width:79px;height:24px;overflow:hidden"><span style="left:0;right:-7px;text-align:center;top:-1px;font-size:13.33px;line-height:25px;color:#000;">0002</span></div>
<div style="left:853px;top:354.0px;width:143px;height:24px;overflow:hidden"><span style="left:6px;top:-1px;font-size:13.33px;line-height:25px;color:#000;">Expense</span></div>
<div style="left:1303px;top:354.0px;width:95px;height:24px;overflow:hidden"><span style="left:6px;top:-1px;font-size:13.33px;line-height:25px;color:#000;">Recipient</span></div>
<div style="left:1617px;top:354.0px;width:82px;height:24px;overflow:hidden"><span style="left:0;right:-7px;text-align:center;top:-1px;font-size:13.33px;line-height:25px;color:#000;">03/01/22</span></div>
<div style="left:1706px;top:354.0px;width:144px;height:24px;overflow:hidden"><span style="left:6px;top:-1px;font-size:13.33px;line-height:25px;color:#000;">Employee (Payroll)</span></div>
<div style="left:220px;top:379.0px;width:68px;height:24px;overflow:hidden"><span style="right:0px;top:-1px;font-size:13.33px;line-height:25px;color:#000;margin-right:5px;">00000</span></div>
<div style="left:295px;top:379.0px;width:121px;height:24px;overflow:hidden"><span style="left:6px;top:-1px;font-size:13.33px;line-height:25px;color:#000;">EXAMPLE Grantee</span></div>
<div style="left:423px;top:379.0px;width:143px;height:24px;overflow:hidden"><span style="left:6px;top:-1px;font-size:13.33px;line-height:25px;color:#000;">EXAMPLE Title</span></div>
<div style="left:573px;top:379.0px;width:187px;height:24px;overflow:hidden"><span style="left:6px;top:-1px;font-size:13.33px;line-height:25px;color:#1414f2;text-decoration:underline;">https://app.smartsheet.com/b/form/0a1b2c3d</span></div>
<div style="left:767px;top:379.0px;width:79px;height:24px;overflow:hidden"><span style="left:0;right:-7px;text-align:center;top:-1px;font-size:13.33px;line-height:25px;color:#000;">0003</span></div>
<div style="left:853px;top:379.0px;width:143px;height:24px;overflow:hidden"><span style="left:6px;top:-1px;font-size:13.33px;line-height:25px;color:#000;">Expense</span></div>
<div style="left:1303px;top:379.0px;width:95px;height:24px;overflow:hidden"><span style="left:6px;top:-1px;font-size:13.33px;line-height:25px;color:#000;">Recipient</span></div>
<div style="left:1617px;top:379.0px;width:82px;height:24px;overflow:hidden"><span style="left:0;right:-7px;text-align:center;top:-1px;font-size:13.33px;line-height:25px;color:#000;">03/01/22</span></div>
<div style="left:1706px;top:379.0px;width:144px;height:24px;overflow:hidden"><span style="left:6px;top:-1px;font-size:13.33px;line-height:25px;color:#000;">Property Acquisition (Real)</span></div>
<div style="left:220px;top:404.0px;width:68px;height:24px;overflow:hidden"><span style="right:0px;top:-1px;font-size:13.33px;line-height:25px;color:#000;margin-right:5px;">00000</span></div>
<div style="left:295px;top:404.0px;width:121px;height:24px;overflow:hidden"><span style="left:6px;top:-1px;font-size:13.33px;line-height:25px;color:#000;">EXAMPLE Grantee</span></div>
<div style="left:423px;top:404.0px;width:143px;height:24px;overflow:hidden"><span style="left:6px;top:-1px;font-size:13.33px;line-height:25px;color:#000;">Test Grant</span></div>
<div style="left:573px;top:404.0px;width:187px;height:24px;overflow:hidden"><span style="left:6px;top:-1px;font-size:13.33px;line-height:25px;color:#1414f2;text-decoration:underline;">https://app.smartsheet.com/b/form/0a1b2c3d</span></div>
<div style="left:767px;top:404.0px;width:79px;height:24px;overflow:hidden"><span style="left:0;right:-7px;text-align:center;top:-1px;font-size:13.33px;line-height:25px;color:#000;">1134</span></div>
<div style="left:853px;top:404.0px;width:143px;height:24px;overflow:hidden"><span style="left:6px;top:-1px;font-size:13.33px;line-height:25px;color:#000;">Expense</span></div>
<div style="left:1303px;top:404.0px;width:95px;height:24px;overflow:hidden"><span style="left:6px;top:-1px;font-size:13.33px;line-height:25px;color:#000;">Recipient</span></div>
<div style="left:1617px;top:404.0px;width:82px;height:24px;overflow:hidden"><span style="left:0;right:-7px;text-align:center;top:-1px;font-size:13.33px;line-height:25px;color:#000;">09/06/24</span></div>
<div style="left:1706px;top:404.0px;width:144px;height:24px;overflow:hidden"><span style="left:6px;top:-1px;font-size:13.33px;line-height:25px;color:#000;">Goods Expenses</span></div>
<div style="left:220px;top:429.0px;width:68px;height:24px;overflow:hidden"><span style="right:0px;top:-1px;font-size:13.33px;line-height:25px;color:#000;margin-right:5px;">00000</span></div>
<div style="left:295px;top:429.0px;width:121px;height:24px;overflow:hidden"><span style="left:6px;top:-1px;font-size:13.33px;line-height:25px;color:#000;">EXAMPLE Grantee</span></div>
<div style="left:423px;top:429.0px;width:143px;height:24px;overflow:hidden"><span style="left:6px;top:-1px;font-size:13.33px;line-height:25px;color:#000;">Test Grant</span></div>
<div style="left:573px;top:429.0px;width:187px;height:24px;overflow:hidden"><span style="left:6px;top:-1px;font-size:13.33px;line-height:25px;color:#1414f2;text-decoration:underline;">https://app.smartsheet.com/b/form/0a1b2c3d</span></div>
<div style="left:767px;top:429.0px;width:79px;height:24px;overflow:hidden"><span style="left:0;right:-7px;text-align:center;top:-1px;font-size:13.33px;line-height:25px;color:#000;">1142</span></div>
<div style="left:853px;top:429.0px;width:143px;height:24px;overflow:hidden"><span style="left:6px;top:-1px;font-size:13.33px;line-height:25px;color:#000;">Expense</span></div>
<div style="left:1303px;top:429.0px;width:95px;height:24px;overflow:hidden"><span style="left:6px;top:-1px;font-size:13.33px;line-height:25px;color:#000;">Recipient</span></div>
<div style="left:1617px;top:429.0px;width:82px;height:24px;overflow:hidden"><span style="left:0;right:-7px;text-align:center;top:-1px;font-size:13.33px;line-height:25px;color:#000;">10/24/24</span></div>
<div style="left:1706px;top:429.0px;width:144px;height:24px;overflow:hidden"><span style="left:6px;top:-1px;font-size:13.33px;line-height:25px;color:#000;">Goods Expenses</span></div>
<div style="left:220px;top:454.5px;width:68px;height:24px;overflow:hidden"><span style="right:0px;top:-1px;font-size:13.33px;line-height:25px;color:#000;margin-right:5px;">00000</span></div>
<div style="left:295px;top:454.5px;width:121px;height:24px;overflow:hidden"><span style="left:6px;top:-1px;font-size:13.33px;line-height:25px;color:#000;">EXAMPLE Grantee</span></div>
<div style="left:423px;top:454.5px;width:143px;height:24px;overflow:hidden"><span style="left:6px;top:-1px;font-size:13.33px;line-height:25px;color:#000;">Test Grant</span></div>
<div style="left:573px;top:454.5px;width:187px;height:24px;overflow:hidden"><span style="left:6px;top:-1px;font-size:13.33px;line-height:25px;color:#1414f2;text-decoration:underline;">https://app.smartsheet.com/b/form/0a1b2c3d</span></div>
<div style="left:767px;top:454.5px;width:79px;height:24px;overflow:hidden"><span style="left:0;right:-7px;text-align:center;top:-1px;font-size:13.33px;line-height:25px;color:#000;">1143</span></div>
<div style="left:853px;top:454.5px;width:143px;height:24px;overflow:hidden"><span style="left:6px;top:-1px;font-size:13.33px;line-height:25px;color:#000;">Expense</span></div>
<div style="left:1303px;top:454.5px;width:95px;height:24px;overflow:hidden"><span style="left:6px;top:-1px;font-size:13.33px;line-height:25px;color:#000;">Recipient</span></div>
<div style="left:1617px;top:454.5px;width:82px;height:24px;overflow:hidden"><span style="left:0;right:-7px;text-align:center;top:-1px;font-size:13.33px;line-height:25px;color:#000;">10/29/24</span></div>
<div style="left:1706px;top:454.5px;width:144px;height:24px;overflow:hidden"><span style="left:6px;top:-1px;font-size:13.33px;line-height:25px;color:#000;">Contract and Services Expenses</span></div>
<div style="left:220px;top:479.5px;width:68px;height:24px;overflow:hidden"><span style="right:0px;top:-1px;font-size:13.33px;line-height:25px;color:#000;margin-right:5px;">00000</span></div>
<div style="left:295px;top:479.5px;width:121px;height:24px;overflow:hidden"><span style="left:6px;top:-1px;font-size:13.33px;line-height:25px;color:#000;">EXAMPLE Grantee</span></div>
<div style="left:423px;top:479.5px;width:143px;height:24px;overflow:hidden"><span style="left:6px;top:-1px;font-size:13.33px;line-height:25px;color:#000;">Test Grant</span></div>
<div style="left:573px;top:479.5px;width:187px;height:24px;overflow:hidden"><span style="left:6px;top:-1px;font-size:13.33px;line-height:25px;color:#1414f2;text-decoration:underline;">https://app.smartsheet.com/b/form/0a1b2c3d</span></div>
<div style="left:767px;top:479.5px;width:79px;height:24px;overflow:hidden"><span style="left:0;right:-7px;text-align:center;top:-1px;font-size:13.33px;line-height:25px;color:#000;">1145</span></div>
<div style="left:853px;top:479.5px;width:143px;height:24px;overflow:hidden"><span style="left:6px;top:-1px;font-size:13.33px;line-height:25px;color:#000;">Expense</span></div>
<div style="left:1303px;top:479.5px;width:95px;height:24px;overflow:hidden"><span style="left:6px;top:-1px;font-size:13.33px;line-height:25px;color:#000;">Recipient</span></div>
<div style="left:1617px;top:479.5px;width:82px;height:24px;overflow:hidden"><span style="left:0;right:-7px;text-align:center;top:-1px;font-size:13.33px;line-height:25px;color:#000;">11/07/24</span></div>
<div style="left:1706px;top:479.5px;width:144px;height:24px;overflow:hidden"><span style="left:6px;top:-1px;font-size:13.33px;line-height:25px;color:#000;">Goods Expenses</span></div>
<div style="left:220px;top:504.5px;width:68px;height:24px;overflow:hidden"><span style="right:0px;top:-1px;font-size:13.33px;line-height:25px;color:#000;margin-right:5px;">00000</span></div>
<div style="left:295px;top:504.5px;width:121px;height:24px;overflow:hidden"><span style="left:6px;top:-1px;font-size:13.33px;line-height:25px;color:#000;">EXAMPLE Grantee</span></div>
<div style="left:423px;top:504.5px;width:143px;height:24px;overflow:hidden"><span style="left:6px;top:-1px;font-size:13.33px;line-height:25px;color:#000;">Test Grant</span></div>
<div style="left:573px;top:504.5px;width:187px;height:24px;overflow:hidden"><span style="left:6px;top:-1px;font-size:13.33px;line-height:25px;color:#1414f2;text-decoration:underline;">https://app.smartsheet.com/b/form/0a1b2c3d</span></div>
<div style="left:767px;top:504.5px;width:79px;height:24px;overflow:hidden"><span style="left:0;right:-7px;text-align:center;top:-1px;font-size:13.33px;line-height:25px;color:#000;">1133</span></div>
<div style="left:853px;top:504.5px;width:143px;height:24px;overflow:hidden"><span style="left:6px;top:-1px;font-size:13.33px;line-height:25px;color:#000;">Quarterly Performance</span></div>
<div style="left:1003px;top:504.5px;width:143px;height:24px;overflow:hidden"><span style="left:6px;top:-1px;font-size:13.33px;line-height:25px;color:#000;">Jul thru Sep:  Due Oct 15</span></div>
<div style="left:1153px;top:504.5px;width:143px;height:24px;overflow:hidden"><span style="right:0px;top:-1px;font-size:13.33px;line-height:25px;color:#000;">2024</span></div>
<div style="left:572px;top:479px;width:191px;height:22px;border:2px solid #4b8fdc;background:transparent"></div>
<div style="left:764px;top:502px;width:5px;height:5px;background:#5594d9;"></div>
<div style="left:1850px;top:329px;width:17px;height:695px;background:#fff;"></div>
<div style="left:1852.5px;top:347.5px;width:11.5px;height:347.5px;background:#a3a3a3;"></div>
<svg style="left:1854.0px;top:337.5px;" width="8" height="5" viewBox="0 0 8 5"><path d="M0 5 L4 0 L8 5 Z" fill="#8a8a8a"/></svg>
<svg style="left:1854.0px;top:997.5px;" width="8" height="5" viewBox="0 0 8 5"><path d="M0 0 L4 5 L8 0 Z" fill="#8a8a8a"/></svg>
<div style="left:138px;top:1007px;width:1712px;height:17px;background:#fff;"></div>
<div style="left:155px;top:1012px;width:465px;height:12px;background:#a3a3a3;"></div>
<svg style="left:143.5px;top:1013.0px;" width="5" height="8" viewBox="0 0 5 8"><path d="M5 0 L0 4 L5 8 Z" fill="#777"/></svg>
<svg style="left:1839.5px;top:1013.0px;" width="5" height="8" viewBox="0 0 5 8"><path d="M0 0 L5 4 L0 8 Z" fill="#777"/></svg>
<div style="left:1867px;top:216px;width:53px;height:808px;background:#fff;"></div>
<div style="left:1866px;top:216px;width:1.5px;height:808px;background:#dedede;"></div>
<svg style="left:1884.0px;top:235.0px;" width="20" height="18" viewBox="0 0 20 18"><path d="M1 1 H19 V13 H8 L5 16.5 V13 H1 Z" fill="none" stroke="#3c3c3c" stroke-width="1.6" stroke-linejoin="round"/></svg>
<svg style="left:1884.0px;top:282.5px;" width="20" height="20" viewBox="0 0 20 20"><path d="M14.5 5.5 L7 13 A2 2 0 0 0 9.8 15.8 L17.3 8.3 A3.8 3.8 0 0 0 11.9 2.9 L4.2 10.6 A5.6 5.6 0 0 0 12.1 18.5" fill="none" stroke="#3c3c3c" stroke-width="1.5" transform="rotate(8 10 10)"/></svg>
<svg style="left:1884px;top:329px;" width="20" height="22" viewBox="0 0 20 22"><rect x="1" y="7.5" width="18" height="12.5" rx="1" fill="none" stroke="#3c3c3c" stroke-width="1.6"/><path d="M4 4.6 H16" stroke="#777" stroke-width="1.2"/><path d="M6 2 H14" stroke="#999" stroke-width="1.1"/><rect x="14.3" y="15.5" width="4" height="4" fill="#fff" stroke="#3c3c3c" stroke-width="1.2"/></svg>
<svg style="left:1884px;top:378px;" width="20" height="20" viewBox="0 0 20 20"><path d="M13 1 H1 V19 H15.5 V16" fill="none" stroke="#333" stroke-width="1.7"/><path d="M17.5 1.5 V11" stroke="#333" stroke-width="1.5"/><path d="M15 9.5 H20 L17.5 13.8 Z" fill="#333"/></svg>
<span style="left:1887.00px;top:378.60px;font-size:15px;line-height:20px;color:#333;">B</span>
<svg style="left:1884.0px;top:426.5px;" width="20" height="20" viewBox="0 0 20 20"><path d="M2.8 11.5 A7.3 7.3 0 0 1 14.5 4.2 M17.2 8.5 A7.3 7.3 0 0 1 5.5 15.8" fill="none" stroke="#3c3c3c" stroke-width="1.6"/><path d="M16.8 1.8 L16.3 6.3 L12 5 Z M3.2 18.2 L3.7 13.7 L8 15 Z" fill="#3c3c3c"/><path d="M7 10.2 L9.2 12.3 L13 8" fill="none" stroke="#3c3c3c" stroke-width="1.5"/></svg>
<svg style="left:1886.0px;top:473.5px;" width="16" height="20" viewBox="0 0 16 20"><path d="M1 1 H10.5 L15 5.5 V19 H1 Z" fill="none" stroke="#3c3c3c" stroke-width="1.6" stroke-linejoin="round"/><path d="M8 15 V9 M5.3 11.5 L8 8.8 L10.7 11.5" fill="none" stroke="#3c3c3c" stroke-width="1.5"/></svg>
<svg style="left:1884.0px;top:522.5px;" width="20" height="20" viewBox="0 0 20 20"><circle cx="10" cy="10" r="8.8" fill="none" stroke="#3c3c3c" stroke-width="1.6"/><path d="M3.5 10.5 H7 L8.8 6.5 L11.4 13.5 L13 10.5 H16.5" fill="none" stroke="#3c3c3c" stroke-width="1.4" stroke-linejoin="round"/></svg>
<svg style="left:1884.0px;top:570.0px;" width="20" height="20" viewBox="0 0 20 20"><path d="M6.5 2.5 H18.5 V17.5 H6.5" fill="none" stroke="#3c3c3c" stroke-width="1.6"/><rect x="1.5" y="4.5" width="8" height="13" rx="1" fill="#fff" stroke="#3c3c3c" stroke-width="1.6"/><path d="M12 14.5 H16" stroke="#3c3c3c" stroke-width="1.4"/></svg>
<svg style="left:1884.0px;top:618.5px;" width="20" height="20" viewBox="0 0 20 20"><g transform="rotate(-45 10 10)" fill="none" stroke="#3c3c3c" stroke-width="1.5"><rect x="3.5" y="6.8" width="6" height="6.4" rx="3"/><rect x="10.5" y="6.8" width="6" height="6.4" rx="3"/><path d="M-1.5 10 H3.5 M16.5 10 H21.5"/></g></svg>
<svg style="left:1883.0px;top:665.0px;" width="22" height="22" viewBox="0 0 22 22"><path d="M8.5 4 C9.3 9 11 10.7 16 11.5 C11 12.3 9.3 14 8.5 19 C7.7 14 6 12.3 1 11.5 C6 10.7 7.7 9 8.5 4 Z" fill="#222"/><path d="M17 1 C17.4 3.6 18.4 4.6 21 5 C18.4 5.4 17.4 6.4 17 9 C16.6 6.4 15.6 5.4 13 5 C15.6 4.6 16.6 3.6 17 1 Z" fill="#222"/></svg>
</div></body></html>
